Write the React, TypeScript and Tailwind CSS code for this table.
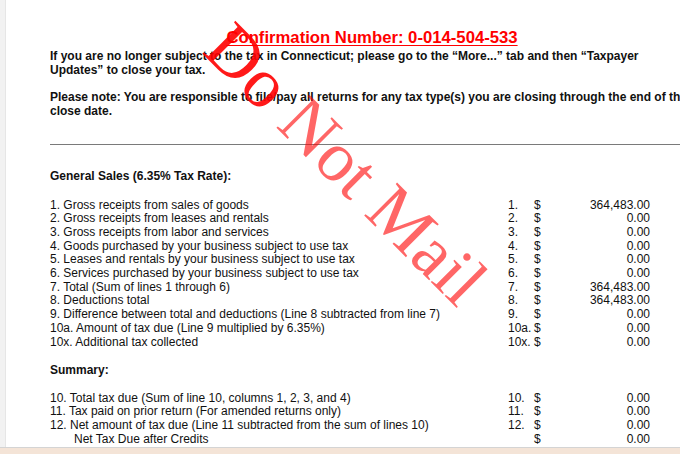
import React from "react";

const rows1: [string, string, string][] = [
  ["1. Gross receipts from sales of goods", "1.", "364,483.00"],
  ["2. Gross receipts from leases and rentals", "2.", "0.00"],
  ["3. Gross receipts from labor and services", "3.", "0.00"],
  ["4. Goods purchased by your business subject to use tax", "4.", "0.00"],
  ["5. Leases and rentals by your business subject to use tax", "5.", "0.00"],
  ["6. Services purchased by your business subject to use tax", "6.", "0.00"],
  ["7. Total (Sum of lines 1 through 6)", "7.", "364,483.00"],
  ["8. Deductions total", "8.", "364,483.00"],
  ["9. Difference between total and deductions (Line 8 subtracted from line 7)", "9.", "0.00"],
  ["10a. Amount of tax due (Line 9 multiplied by 6.35%)", "10a.", "0.00"],
  ["10x. Additional tax collected", "10x.", "0.00"],
];

const rows2: [string, string, string, boolean?][] = [
  ["10. Total tax due (Sum of line 10, columns 1, 2, 3, and 4)", "10.", "0.00"],
  ["11. Tax paid on prior return (For amended returns only)", "11.", "0.00"],
  ["12. Net amount of tax due (Line 11 subtracted from the sum of lines 10)", "12.", "0.00"],
  ["Net Tax Due after Credits", "", "0.00", true],
];

function Row({ label, num, val, indent }: { label: string; num: string; val: string; indent?: boolean }) {
  return (
    <div className="flex whitespace-nowrap leading-[13.7px]">
      <div className={"w-[458px] " + (indent ? "pl-[24px]" : "")}>{label}</div>
      <div className="w-[26px]">{num}</div>
      <div className="w-[10px]">$</div>
      <div className="w-[106px] text-right">{val}</div>
    </div>
  );
}

export default function App() {
  return (
    <div
      className="relative w-[680px] h-[454px] overflow-hidden bg-white flex flex-col text-[#111]"
      style={{ fontFamily: '"Liberation Sans", Arial, sans-serif' }}
    >
      <div className="flex flex-1 min-h-0">
        <div className="w-[6px] bg-[#f2f2f2] border-r border-[#e6e6e6]" />
        <div className="flex-1 min-w-0 overflow-hidden pl-[44px] pt-[28px]">
          <div className="w-[644px]">
            <div className="text-center text-[16.7px] leading-[19px] font-bold text-[#ff0000] whitespace-nowrap">
              <span className="underline underline-offset-[2px]">Confirmation Number: 0-014-504-533</span>
            </div>
            <p className="mt-[2px] text-[12px] leading-[14px] font-bold whitespace-nowrap">
              If you are no longer subject to the tax in Connecticut; please go to the “More...” tab and then “Taxpayer
              <br />
              Updates” to close your tax.
            </p>
            <p className="mt-[13px] text-[12px] leading-[14px] font-bold whitespace-nowrap">
              Please note: You are responsible to file/pay all returns for any tax type(s) you are closing through the end of the
              <br />
              close date.
            </p>
            <div className="mt-[26px] h-px bg-[#7a7a7a] w-[700px]" />
            <div className="mt-[24px] text-[12px] leading-[14px] font-bold">General Sales (6.35% Tax Rate):</div>
            <div className="mt-[15.5px] text-[12px]">
              {rows1.map((r) => (
                <Row key={r[0]} label={r[0]} num={r[1]} val={r[2]} />
              ))}
            </div>
            <div className="mt-[14px] text-[12px] leading-[14px] font-bold">Summary:</div>
            <div className="mt-[14.5px] text-[12px]">
              {rows2.map((r) => (
                <Row key={r[0]} label={r[0]} num={r[1]} val={r[2]} indent={r[3]} />
              ))}
            </div>
          </div>
        </div>
      </div>
      <div className="h-[7px] border-t border-[#d4d4d4] bg-[#f4e4d7]" />
      <div
        className="absolute left-[346px] top-[164px] pointer-events-none whitespace-nowrap text-[71px] leading-none"
        style={{
          fontFamily: '"Liberation Serif", "Times New Roman", serif',
          transform: "translate(-50%, -50%) rotate(45deg)",
        }}
      >
        <span className="text-[#ff0000]/90">Do </span>
        <span className="text-[#ff0000]/60">Not Mail</span>
      </div>
    </div>
  );
}
